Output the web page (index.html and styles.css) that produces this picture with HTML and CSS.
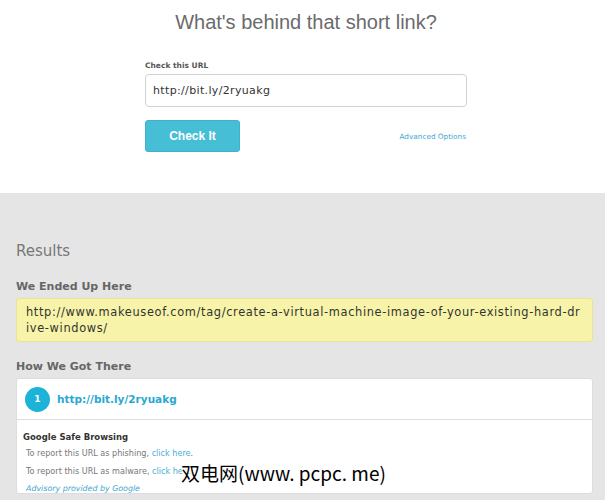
FILE: index.html
```html
<!DOCTYPE html>
<html lang="en">
  <head>
    <meta charset="UTF-8" />
    <meta name="viewport" content="width=device-width, initial-scale=1.0" />
    <title>Check short link</title>
    <link rel="stylesheet" href="styles.css">
  </head>
  <body>
    <section class="top">
      <h1 class="title">What's behind that short link?</h1>
      <form class="checkForm" action="">
        <label class="urlLabel" for="url">Check this URL</label>
        <input class="urlInput" type="text" id="url" value="http://bit.ly/2ryuakg" />
        <div class="formRow">
          <button class="checkBtn" type="submit">Check It</button>
          <a class="advLink" href="#">Advanced Options</a>
        </div>
      </form>
    </section>
    <section class="results">
      <h2 class="resultsHead">Results</h2>
      <h3 class="subHead">We Ended Up Here</h3>
      <div class="finalUrl">http://www.makeuseof.com/tag/create-a-virtual-machine-image-of-your-existing-hard-drive-windows/</div>
      <h3 class="subHead">How We Got There</h3>
      <div class="hopCard">
        <div class="hopTop">
          <span class="hopNum">1</span>
          <a class="hopLink" href="#">http://bit.ly/2ryuakg</a>
        </div>
        <div class="hopBody">
          <h4 class="gsbHead">Google Safe Browsing</h4>
          <p class="gsbLine">To report this URL as phishing, <a href="#">click here</a>.</p>
          <p class="gsbLine">To report this URL as malware, <a href="#">click here</a>.</p>
          <p class="gsbNote"><a href="#">Advisory provided by Google</a></p>
        </div>
      </div>
    </section>
    <div class="watermark">双电网(www. pcpc. me)</div>
  </body>
</html>
```

FILE: styles.css
```css
* {
  margin: 0px;
  padding: 0px;
  box-sizing: border-box;
}
body {
  font-family: "DejaVu Sans", Verdana, sans-serif;
  background-color: #e5e5e5;
  height: 500px;
  overflow: hidden;
  position: relative;
}
a {
  text-decoration: none;
}
.top {
  background-color: #fff;
  height: 193px;
  padding-top: 11px;
  padding-left: 7px;
}
.title {
  text-align: center;
  font-family: "Liberation Sans", Arial, sans-serif;
  font-weight: normal;
  font-size: 20px;
  color: #6b6b6b;
}
.checkForm {
  width: 322px;
  margin: 27px auto 0;
  display: flex;
  flex-direction: column;
}
.urlLabel {
  font-size: 7.5px;
  font-weight: bold;
  color: #555;
  margin-bottom: 4px;
}
.urlInput {
  height: 33px;
  border: 1px solid #d2d2d2;
  border-radius: 4px;
  padding: 0 7px;
  font-family: "DejaVu Sans", Verdana, sans-serif;
  font-size: 11px;
  letter-spacing: 0.35px;
  color: #333;
  outline: none;
}
.formRow {
  display: flex;
  justify-content: space-between;
  align-items: center;
  margin-top: 13px;
}
.checkBtn {
  width: 95px;
  height: 32px;
  background-color: #46bed6;
  border: 1px solid #3db2ca;
  border-radius: 3px;
  color: #fff;
  font-family: "Liberation Sans", Arial, sans-serif;
  font-weight: bold;
  font-size: 12px;
}
.advLink {
  font-size: 7.3px;
  color: #42a7d2;
  margin-right: 1px;
}
.results {
  padding: 49px 12px 0 16px;
}
.resultsHead {
  font-weight: normal;
  font-size: 15px;
  color: #777;
  margin-bottom: 20px;
}
.subHead {
  font-size: 11px;
  font-weight: bold;
  color: #666;
  margin-bottom: 5px;
}
.finalUrl {
  background-color: #f7f3a8;
  border: 1px solid #e9e29c;
  border-radius: 3px;
  padding: 5px 9px;
  font-size: 11.4px;
  letter-spacing: 0.65px;
  line-height: 16px;
  color: #333;
  word-break: break-all;
  margin-bottom: 18px;
}
.hopCard {
  background-color: #fff;
  border-radius: 3px;
  border: 1px solid #ddd;
}
.hopTop {
  height: 41px;
  display: flex;
  align-items: center;
  gap: 7px;
  padding-left: 8px;
  border-bottom: 1px solid #ddd;
}
.hopNum {
  width: 25px;
  height: 25px;
  border-radius: 50%;
  background-color: #1bb4d8;
  color: #fff;
  font-weight: bold;
  font-size: 9px;
  display: flex;
  align-items: center;
  justify-content: center;
}
.hopLink {
  font-weight: bold;
  font-size: 10.5px;
  color: #2aa8d2;
}
.hopBody {
  padding: 12px 6px 0;
}
.gsbHead {
  font-size: 8.5px;
  color: #333;
  margin-bottom: 6px;
}
.gsbLine {
  font-size: 8.1px;
  color: #777;
  padding-left: 3px;
  margin-bottom: 8px;
}
.gsbLine a {
  color: #4aaed6;
}
.gsbNote {
  font-size: 7.9px;
  font-style: italic;
  padding-left: 3px;
}
.gsbNote a {
  color: #3aa7d2;
}
.watermark {
  position: absolute;
  left: 181px;
  top: 459px;
  font-family: "Noto Sans CJK SC", "DejaVu Sans", sans-serif;
  font-size: 19px;
  color: #000;
  text-shadow: -1px -1px 0 #fff, 1px -1px 0 #fff, -1px 1px 0 #fff, 1px 1px 0 #fff;
}
```
